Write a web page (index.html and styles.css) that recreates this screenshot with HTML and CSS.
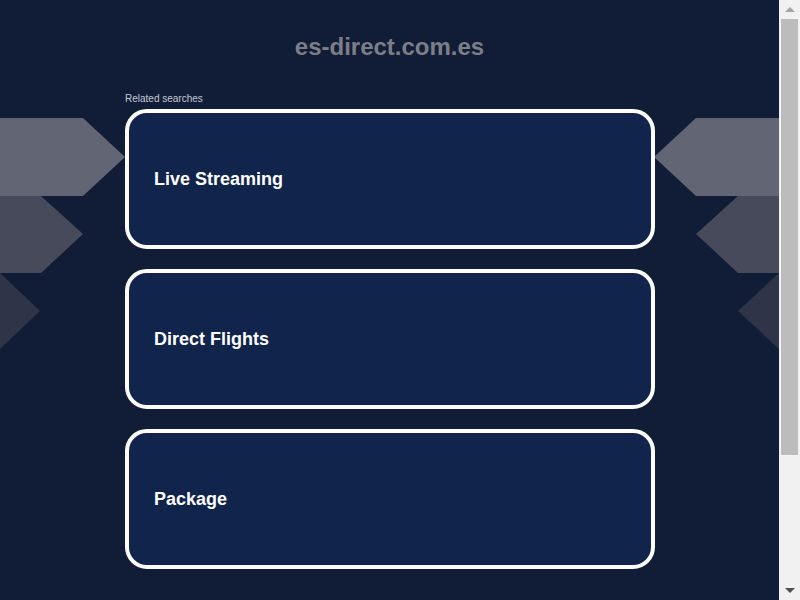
FILE: index.html
```html
<!DOCTYPE html>
<html lang="en">
<head>
<meta charset="utf-8">
<title>es-direct.com.es</title>
<link rel="stylesheet" href="styles.css">
</head>
<body>
<div class="window">
  <div class="page">
    <div class="deco deco-left">
      <svg width="125" height="235" viewBox="0 0 125 235">
        <polygon points="0,0 83,0 125,39 83,78 0,78" fill="#626574"/>
        <polygon points="0,78 41,78 83,116 41,155 0,155" fill="#474a5a"/>
        <polygon points="0,155 40,193 0,231" fill="#303448"/>
      </svg>
    </div>
    <div class="deco deco-right">
      <svg width="125" height="235" viewBox="0 0 125 235">
        <polygon points="125,0 42,0 0,39 42,78 125,78" fill="#626574"/>
        <polygon points="125,78 84,78 42,116 84,155 125,155" fill="#474a5a"/>
        <polygon points="125,155 84,193 125,231" fill="#303448"/>
      </svg>
    </div>
    <header class="header">
      <h1 class="domain">es-direct.com.es</h1>
    </header>
    <main class="content">
      <div class="label">Related searches</div>
      <ul class="cards">
        <li class="card"><a class="card-link" href="#">Live Streaming</a></li>
        <li class="card"><a class="card-link" href="#">Direct Flights</a></li>
        <li class="card"><a class="card-link" href="#">Package</a></li>
      </ul>
    </main>
  </div>
  <div class="scrollbar" aria-hidden="true">
    <div class="sb-arrow sb-up"></div>
    <div class="sb-track"><div class="sb-thumb"></div></div>
    <div class="sb-arrow sb-down"></div>
  </div>
</div>
</body>
</html>
```
FILE: styles.css
```css
html, body {
  margin: 0;
  padding: 0;
  height: 600px;
  overflow: hidden;
}
body {
  background: #111c36;
  font-family: "Liberation Sans", Arial, sans-serif;
}
.window {
  display: flex;
  height: 600px;
}
.page {
  flex: 1;
  position: relative;
  overflow: hidden;
}
.deco {
  position: absolute;
  top: 118px;
  line-height: 0;
}
.deco-left { left: 0; }
.deco-right { right: 0; }
.header {
  padding-top: 32px;
  text-align: center;
}
.domain {
  margin: 0;
  font-size: 24px;
  line-height: 30px;
  font-weight: bold;
  color: #7c7f87;
}
.content {
  width: 530px;
  margin: 0 0 0 125px;
  padding-top: 31px;
  position: relative;
}
.label {
  font-size: 10px;
  line-height: 12px;
  color: #c3cad6;
  margin-bottom: 4px;
}
.cards {
  list-style: none;
  margin: 0;
  padding: 0;
  display: flex;
  flex-direction: column;
  gap: 20px;
}
.card {
  height: 140px;
  box-sizing: border-box;
  border: 4px solid #ffffff;
  border-radius: 22px;
  background: #11244b;
}
.card-link {
  display: flex;
  align-items: center;
  height: 100%;
  box-sizing: border-box;
  padding: 1px 0 0 25px;
  color: #ffffff;
  text-decoration: none;
  font-size: 18px;
  font-weight: bold;
}
.scrollbar {
  width: 21px;
  background: #f1f1f1;
  display: flex;
  flex-direction: column;
  align-items: center;
}
.sb-arrow {
  height: 19px;
  width: 100%;
  display: flex;
  align-items: center;
  justify-content: center;
}
.sb-up::before {
  content: "";
  border-left: 5px solid transparent;
  border-right: 5px solid transparent;
  border-bottom: 5px solid #a3a3a3;
}
.sb-down::before {
  content: "";
  border-left: 5px solid transparent;
  border-right: 5px solid transparent;
  border-top: 5px solid #505050;
}
.sb-track {
  flex: 1;
  width: 100%;
  padding: 0 2px;
  box-sizing: border-box;
}
.sb-thumb {
  height: 436px;
  background: #bcbcbc;
}
```
